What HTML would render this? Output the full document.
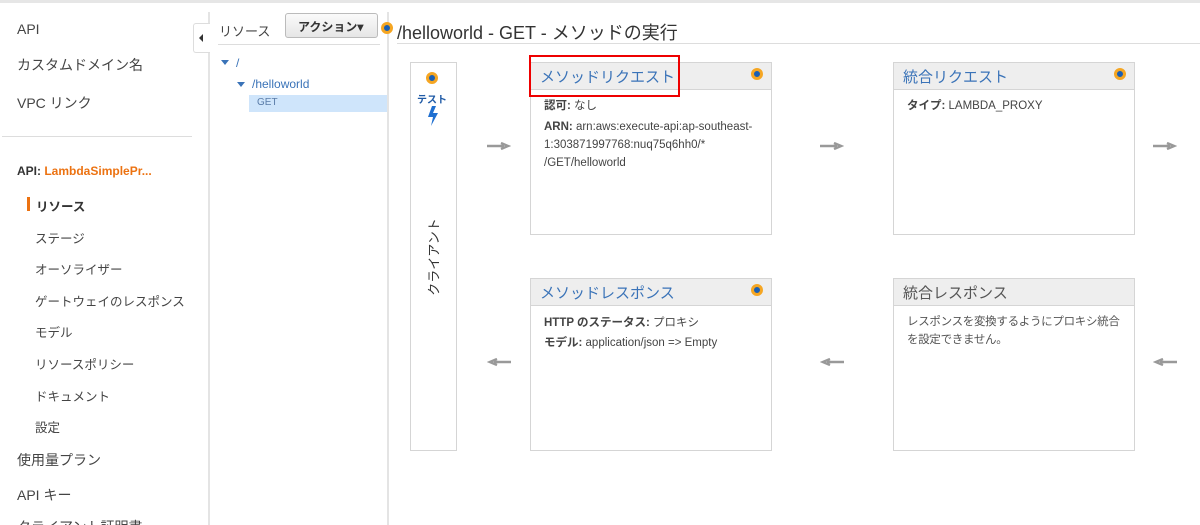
<!DOCTYPE html>
<html><head><meta charset="utf-8"><style>
*{margin:0;padding:0;box-sizing:border-box}
html,body{width:1200px;height:525px;overflow:hidden}
body{background:#fff;font-family:"Liberation Sans","Noto Sans CJK JP",sans-serif;color:#444;position:relative}
.a{position:absolute;white-space:nowrap}
.nav{font-size:14px;color:#444}
.sub{font-size:12.5px;color:#444}
.box{position:absolute;border:1px solid #d5d5d5;background:#fff}
.hd{height:27px;background:#eee;border-bottom:1px solid #d5d5d5;font-size:15px;color:#3a73b8;padding:3px 0 0 9px;white-space:nowrap}
.dot{position:absolute;width:12px;height:12px;border-radius:50%;background:#1a5fb4;border:3px solid #f5a623}
.bd{font-size:11.5px;color:#444;padding:0 13px;line-height:18px;white-space:nowrap}
.arr{position:absolute;width:24px;height:10px}
</style></head><body>
<div class="a" style="left:0;top:0;width:1200px;height:3px;background:#e6e6e6"></div>
<div class="a nav" style="left:17px;top:21px">API</div>
<div class="a nav" style="left:17px;top:55px">カスタムドメイン名</div>
<div class="a nav" style="left:17px;top:93px">VPC リンク</div>
<div class="a" style="left:2px;top:136px;width:190px;height:1px;background:#ddd"></div>
<div class="a" style="left:17px;top:164px;font-size:12px;font-weight:bold;color:#333">API: <span style="color:#ec7211">LambdaSimplePr...</span></div>
<div class="a" style="left:27px;top:197px;width:3px;height:14px;background:#ec7211"></div>
<div class="a sub" style="left:36px;top:196px;font-weight:bold;color:#333">リソース</div>
<div class="a sub" style="left:35px;top:228px">ステージ</div>
<div class="a sub" style="left:35px;top:259px">オーソライザー</div>
<div class="a sub" style="left:35px;top:291px">ゲートウェイのレスポンス</div>
<div class="a sub" style="left:35px;top:322px">モデル</div>
<div class="a sub" style="left:35px;top:354px">リソースポリシー</div>
<div class="a sub" style="left:35px;top:386px">ドキュメント</div>
<div class="a sub" style="left:35px;top:417px">設定</div>
<div class="a nav" style="left:17px;top:450px">使用量プラン</div>
<div class="a nav" style="left:17px;top:485px">API キー</div>
<div class="a nav" style="left:17px;top:517px">クライアント証明書</div>
<div class="a" style="left:208px;top:12px;width:2px;height:513px;background:#e4e4e4"></div>
<div class="a" style="left:193px;top:23px;width:17px;height:30px;background:#fff;border:1px solid #ddd;border-right:none;border-radius:3px 0 0 3px"></div>
<div class="a" style="left:199px;top:34px;width:0;height:0;border-top:4px solid transparent;border-bottom:4px solid transparent;border-right:4px solid #333"></div>
<div class="a" style="left:219px;top:21px;font-size:13px;color:#444">リソース</div>
<div class="a" style="left:285px;top:13px;width:93px;height:25px;border:1px solid #bbb;border-radius:3px;background:linear-gradient(#fafafa,#e6e6e6);font-size:12px;font-weight:bold;color:#333;padding:4px 0 0 12px">アクション▾</div>
<div class="a" style="left:218px;top:44px;width:162px;height:1px;background:#ddd"></div>
<div class="a" style="left:221px;top:60px;width:0;height:0;border-left:4px solid transparent;border-right:4px solid transparent;border-top:5px solid #3a73b8"></div>
<div class="a" style="left:236px;top:56px;font-size:12px;color:#3a73b8">/</div>
<div class="a" style="left:237px;top:82px;width:0;height:0;border-left:4px solid transparent;border-right:4px solid transparent;border-top:5px solid #3a73b8"></div>
<div class="a" style="left:252px;top:77px;font-size:12px;color:#3a73b8">/helloworld</div>
<div class="a" style="left:249px;top:95px;width:139px;height:17px;background:#cfe5fb"></div>
<div class="a" style="left:257px;top:97px;font-size:10px;color:#5a7ca8">GET</div>
<div class="a" style="left:387px;top:12px;width:2px;height:513px;background:#e4e4e4"></div>
<div class="dot" style="left:381px;top:22px"></div>
<div class="a" style="left:397px;top:19px;font-size:18px;color:#333">/helloworld - GET - メソッドの実行</div>
<div class="a" style="left:397px;top:43px;width:803px;height:1px;background:#ddd"></div>
<div class="box" style="left:410px;top:62px;width:47px;height:389px"></div>
<div class="dot" style="left:426px;top:72px"></div>
<div class="a" style="left:417px;top:91px;font-size:10px;font-weight:bold;color:#1f5aa6">テスト</div>
<svg class="a" style="left:427px;top:106px" width="12" height="20" viewBox="0 0 12 20"><path d="M5 0 L1 11 L6 11 L4 20 L11 7 L6 7 L9 0Z" fill="#1f6fd0"/></svg>
<div class="a" style="left:433px;top:257px;font-size:13px;color:#333;transform:translate(-50%,-50%) rotate(-90deg)">クライアント</div>
<div class="box" style="left:530px;top:62px;width:242px;height:173px"><div class="hd">メソッドリクエスト</div>
<div class="bd" style="padding-top:7px"><b>認可:</b> なし</div>
<div class="bd" style="padding-top:3px"><b>ARN:</b> arn:aws:execute-api:ap-southeast-<br>1:303871997768:nuq75q6hh0/*<br>/GET/helloworld</div></div>
<div class="dot" style="left:751px;top:68px"></div>
<div class="a" style="left:529px;top:55px;width:151px;height:42px;border:2px solid #e00"></div>
<div class="box" style="left:893px;top:62px;width:242px;height:173px"><div class="hd">統合リクエスト</div>
<div class="bd" style="padding-top:7px"><b>タイプ:</b> LAMBDA_PROXY</div></div>
<div class="dot" style="left:1114px;top:68px"></div>
<div class="box" style="left:530px;top:278px;width:242px;height:173px"><div class="hd">メソッドレスポンス</div>
<div class="bd" style="padding-top:8px"><b>HTTP のステータス:</b> プロキシ</div>
<div class="bd" style="padding-top:2px"><b>モデル:</b> application/json =&gt; Empty</div></div>
<div class="dot" style="left:751px;top:284px"></div>
<div class="box" style="left:893px;top:278px;width:242px;height:173px"><div class="hd" style="color:#555">統合レスポンス</div>
<div class="bd" style="padding-top:7px;color:#555;padding-left:13px;letter-spacing:-0.3px">レスポンスを変換するようにプロキシ統合<br>を設定できません。</div></div>
<svg class="arr" style="left:487px;top:141px" viewBox="0 0 24 10"><path d="M0 5H17M14 2L21 5L14 8" stroke="#999" stroke-width="2.5" fill="none"/></svg>
<svg class="arr" style="left:820px;top:141px" viewBox="0 0 24 10"><path d="M0 5H17M14 2L21 5L14 8" stroke="#999" stroke-width="2.5" fill="none"/></svg>
<svg class="arr" style="left:1153px;top:141px" viewBox="0 0 24 10"><path d="M0 5H17M14 2L21 5L14 8" stroke="#999" stroke-width="2.5" fill="none"/></svg>
<svg class="arr" style="left:487px;top:357px" viewBox="0 0 24 10"><path d="M24 5H7M10 2L3 5L10 8" stroke="#999" stroke-width="2.5" fill="none"/></svg>
<svg class="arr" style="left:820px;top:357px" viewBox="0 0 24 10"><path d="M24 5H7M10 2L3 5L10 8" stroke="#999" stroke-width="2.5" fill="none"/></svg>
<svg class="arr" style="left:1153px;top:357px" viewBox="0 0 24 10"><path d="M24 5H7M10 2L3 5L10 8" stroke="#999" stroke-width="2.5" fill="none"/></svg>
</body></html>
